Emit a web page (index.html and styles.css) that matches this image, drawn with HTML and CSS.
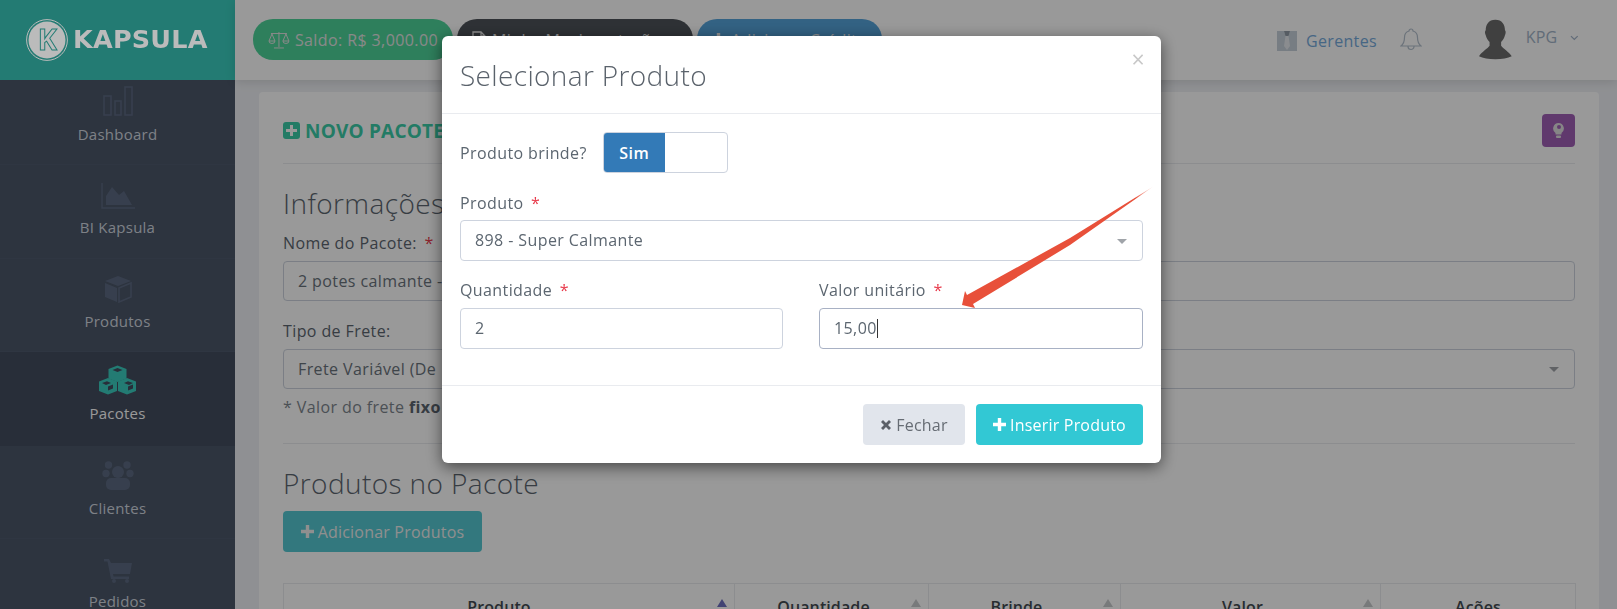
FILE: index.html
```html
<!DOCTYPE html>
<html lang="pt-BR">
<head>
<meta charset="utf-8">
<title>Kapsula - Novo Pacote</title>
<link rel="stylesheet" href="styles.css">
</head>
<body>
<div class="app">
  <aside class="sidebar">
    <div class="brand">
      <svg class="brand-mark" viewBox="0 0 42 42" width="42" height="42">
        <circle cx="21" cy="21" r="20.400" fill="none" stroke="#bbb" stroke-width="1"/>
        <circle cx="21" cy="21" r="18.500" fill="#bbb"/>
        <text x="21.500" y="31" text-anchor="middle" class="brand-k">K</text>
      </svg>
      <span class="brand-name">KAPSULA</span>
    </div>
    <nav class="nav">
      <a class="nav-item nav-first">
        <svg class="nav-icon" width="30" height="30" viewBox="0 0 30 30" fill="none" stroke="#5d6a82" stroke-width="1.600"><rect x="1" y="10" width="7" height="19"/><rect x="12" y="15" width="6" height="14"/><rect x="22" y="1" width="7" height="28"/></svg>
        <span>Dashboard</span>
      </a>
      <a class="nav-item">
        <svg class="nav-icon" width="34" height="26" viewBox="0 0 34 26"><path d="M1 0v25h33" fill="none" stroke="#5d6a82" stroke-width="1.400"/><path d="M5 22V13l6-9 7 8 5-4 8 14z" fill="#5d6a82"/></svg>
        <span>BI Kapsula</span>
      </a>
      <a class="nav-item">
        <svg class="nav-icon" width="28" height="28" viewBox="0 0 28 28"><path d="M14 1l13 5-13 5L1 6z" fill="#5d6a82"/><path d="M1 8l12 5v14L1 22z" fill="#5d6a82"/><path d="M15 13l12-5v14l-12 5z" fill="none" stroke="#5d6a82" stroke-width="1.600"/></svg>
        <span>Produtos</span>
      </a>
      <a class="nav-item is-active">
        <svg class="nav-icon" width="37" height="30" viewBox="0 0 37 30">
          <path class="cube" d="M18.500 0.500l9 3.500v9.500l-9 3.500-9-3.500V4z"/><path class="cube" d="M9 13l9 3.500V26l-9 3.500L0 26v-9.500z"/><path class="cube" d="M28 13l9 3.500V26l-9 3.500-9-3.500v-9.500z"/>
          <path class="cube-top" d="M18.500 3l5 2-5 2-5-2z"/><path class="cube-top" d="M3 18l5-1.800 4 1.800-5 2z"/><path class="cube-top" d="M25 18l4-1.800 5 1.800-4 2z"/>
          <path class="cube-top" d="M29 21.500l5-2v4l-5 2z"/><path class="cube-top" d="M9 21.500l5-2v4l-5 2z"/>
        </svg>
        <span>Pacotes</span>
      </a>
      <a class="nav-item">
        <svg class="nav-icon" width="32" height="29" viewBox="0 0 32 29" fill="#5d6a82"><circle cx="6.500" cy="4" r="3.700"/><circle cx="25" cy="4" r="3.700"/><circle cx="4" cy="12.500" r="3.700"/><circle cx="28" cy="12.500" r="3.700"/><circle cx="16" cy="11" r="6"/><rect x="4" y="17" width="24" height="12" rx="5"/></svg>
        <span>Clientes</span>
      </a>
      <a class="nav-item">
        <svg class="nav-icon" width="28" height="24" viewBox="0 0 28 24" fill="#5d6a82"><path d="M0 0h5l2 4h21l-2 11H9l.6 2.500H25V20H7L3.500 2.500H0z"/><circle cx="10" cy="22" r="2"/><circle cx="23" cy="22" r="2"/></svg>
        <span>Pedidos</span>
      </a>
    </nav>
  </aside>

  <div class="main">
    <header class="topbar">
      <div class="pills">
        <a class="pill pill-green">
          <svg width="22" height="18" viewBox="0 0 22 18" fill="none" stroke="currentColor" stroke-width="1"><path d="M11 1v15M6 17h10M3 2.500h16M4 3L1 10h6zM18 3l-3 7h6zM1 10a3 2.500 0 0 0 6 0M15 10a3 2.500 0 0 0 6 0"/></svg>
          Saldo: R$ 3,000.00
        </a>
        <a class="pill pill-dark">
          <svg width="14" height="17" viewBox="0 0 14 17" fill="none" stroke="currentColor" stroke-width="1.300"><path d="M1 1h8l4 4v11H1zM9 1v4h4"/></svg>
          Minha Movimentação
        </a>
        <a class="pill pill-blue"><svg class="plus" viewBox="0 0 13 13"><path d="M4.800 0h3.400v4.800H13v3.400H8.200V13H4.800V8.200H0V4.800h4.800z"/></svg> Adicionar Crédito</a>
      </div>
      <div class="top-right">
        <a class="managers">
          <svg width="20" height="20" viewBox="0 0 20 20"><rect width="20" height="20" fill="#c6d0da"/><path d="M7 0h6l-1.500 5 1.500 10-3 4-3-4 1.500-10z" fill="#e6eaef"/><path d="M7 0h6l-1.500 5h-3z" fill="#8f9aa6"/></svg>
          Gerentes
        </a>
        <svg class="bell" width="22" height="23" viewBox="0 0 22 23" fill="none" stroke="#b4c0cd" stroke-width="1.200"><path d="M11 1a2 2 0 0 1 2 2c3 .8 4.500 3.400 4.500 6.500 0 4.500 1 6.500 3.500 8.500H1c2.500-2 3.500-4 3.500-8.500C4.500 6.400 6 3.800 9 3a2 2 0 0 1 2-2zM8 18.500a3 3 0 0 0 6 0"/></svg>
        <div class="user">
          <svg width="34" height="41" viewBox="0 0 34 41" fill="#6b6b6b"><path d="M17 0c7 0 10 5 10 11 1 .5 1 3.500 0 5-.8 3-2 5-4 7v4c2 3 8 6 11 11-4 2-10 3-17 3S4 40 0 38c3-5 9-8 11-11v-4c-2-2-3.200-4-4-7-1-1.500-1-4.500 0-5C7 5 10 0 17 0z"/></svg>
          <span class="user-name">KPG</span>
          <svg class="chevron" width="9" height="6" viewBox="0 0 9 6" fill="none" stroke="#a2b4c9" stroke-width="1.300"><path d="M1 1l3.500 3.500L8 1"/></svg>
        </div>
      </div>
    </header>

    <main class="content">
      <section class="card">
        <div class="card-head">
          <h1 class="card-title">
            <svg width="17" height="17" viewBox="0 0 17 17"><rect width="17" height="17" rx="3" fill="#3bcea8"/><path d="M7 3h3v4h4v3h-4v4H7v-4H3V7h4z" fill="#fff"/></svg>
            NOVO PACOTE
          </h1>
          <a class="tip-btn">
            <svg width="11" height="15" viewBox="0 0 11 15"><path d="M5.500 0a5.500 5.500 0 0 1 3 10v1.500h-6V10a5.500 5.500 0 0 1 3-10z" fill="#e0e0e0"/><circle cx="6" cy="4" r="2" fill="#a05fb6"/><rect x="3" y="12.500" width="5" height="2.500" rx="1" fill="#e0e0e0"/></svg>
          </a>
        </div>
        <h2 class="section-title">Informações</h2>
        <label class="label">Nome do Pacote: <em class="req">*</em></label>
        <div class="field">2 potes calmante -</div>
        <label class="label label-gap">Tipo de Frete:</label>
        <div class="field field-select">Frete Variável (De</div>
        <p class="note">* Valor do frete <b>fixo</b></p>
        <hr class="rule">
        <h2 class="section-title section-products">Produtos no Pacote</h2>
        <a class="btn btn-add"><svg class="plus" viewBox="0 0 13 13"><path d="M4.800 0h3.400v4.800H13v3.400H8.200V13H4.800V8.200H0V4.800h4.800z"/></svg> Adicionar Produtos</a>
        <table class="table">
          <colgroup><col class="c1"><col class="c2"><col class="c3"><col class="c4"><col class="c5"></colgroup>
          <thead>
            <tr>
              <th class="sortable sort-on">Produto</th>
              <th class="sortable">Quantidade</th>
              <th class="sortable">Brinde</th>
              <th class="sortable">Valor</th>
              <th>Ações</th>
            </tr>
          </thead>
        </table>
      </section>
    </main>
  </div>
</div>

<div class="backdrop">
  <div class="modal">
    <div class="modal-head">
      <h3 class="modal-title">Selecionar Produto</h3>
      <span class="close">×</span>
    </div>
    <div class="modal-body">
      <div class="toggle-row">
        <span class="m-label">Produto brinde?</span>
        <div class="toggle"><span class="toggle-on">Sim</span><span class="toggle-off"></span></div>
      </div>
      <label class="m-label m-block">Produto <em class="req">*</em></label>
      <div class="m-field field-select">898 - Super Calmante</div>
      <div class="m-cols">
        <div>
          <label class="m-label m-block">Quantidade <em class="req">*</em></label>
          <div class="m-field">2</div>
        </div>
        <div>
          <label class="m-label m-block">Valor unitário <em class="req">*</em></label>
          <div class="m-field is-focus">15,00<i class="caret"></i></div>
        </div>
      </div>
    </div>
    <div class="modal-foot">
      <a class="btn btn-close"><svg width="12" height="12" viewBox="0 0 12 12"><path d="M1 3l2-2 3 3 3-3 2 2-3 3 3 3-2 2-3-3-3 3-2-2 3-3z" fill="#5b6068"/></svg> Fechar</a>
      <a class="btn btn-insert"><svg class="plus" viewBox="0 0 13 13"><path d="M4.800 0h3.400v4.800H13v3.400H8.200V13H4.800V8.200H0V4.800h4.800z"/></svg> Inserir Produto</a>
    </div>
  </div>
  <svg class="arrow" width="200" height="130" viewBox="0 0 200 130">
    <defs><linearGradient id="fade" x1="1" y1="0" x2="0" y2="1"><stop offset="0" stop-color="#e8503a" stop-opacity="0"/><stop offset=".1" stop-color="#e8503a"/></linearGradient></defs>
    <path d="M195 2L111 54 8 111 6 107 3 121 16 124 14 120 111 61z" fill="url(#fade)"/>
  </svg>
</div>
</body>
</html>
```
FILE: styles.css
```css
* { box-sizing: border-box; }
html, body { margin: 0; height: 609px; overflow: hidden; }
body { font-family: "Open Sans", "Liberation Sans", sans-serif; font-size: 16px; letter-spacing: .4px; color: #5c6670; background: #eff1f5; }
a { text-decoration: none; color: inherit; }
h1, h2, h3, p { margin: 0; font-weight: 400; }
em { font-style: normal; }

.app { display: flex; height: 609px; overflow: hidden; }

.sidebar { width: 235px; flex: none; background: #4b5769; color: #d2d7e0; }
.brand { height: 80px; background: #3bcec0; display: flex; align-items: center; padding: 0 0 0 26px; gap: 5px; }
.brand-mark, .brand-name { position: relative; z-index: 20; }
.brand-k { font: 700 29px "Open Sans", sans-serif; fill: none; stroke: #237c74; stroke-width: 1; }
.brand-name { font: 700 25.500px/1 "DejaVu Sans", sans-serif; color: #bbb; letter-spacing: .2px; }

.nav-item { height: 93.500px; display: flex; flex-direction: column; align-items: center; justify-content: flex-end; padding-bottom: 20.500px; gap: 9px; border-bottom: 1px solid #4f5b6e; font-size: 15px; letter-spacing: .25px; line-height: 19px; }
.nav-first { height: 85px; padding-bottom: 20px; }
.nav-icon { display: block; flex: none; }
.is-active { background: #434d5f; color: #fff; border-bottom-color: #434d5f; padding-bottom: 22px; }
.cube { fill: #3bcec0; }
.cube-top { fill: #434d5f; }

.main { flex: 1; min-width: 0; }
.topbar { height: 80px; background: #fff; display: flex; align-items: center; justify-content: space-between; padding: 0 38px 0 18px; box-shadow: 0 2px 10px rgba(0,0,0,.12); position: relative; }
.pills { display: flex; gap: 4px; margin-top: -1px; }
.pill { height: 41px; border-radius: 20px; display: flex; align-items: center; gap: 6px; padding: 0 15px; color: #eee; white-space: nowrap; }
.pill-green { background: #4ed49a; width: 200px; color: #e4e4e4; gap: 5px; }
.pill-dark { background: #4d5359; width: 236px; }
.pill-blue { background: #55a3da; width: 185px; }
.plus { width: 13px; height: 13px; flex: none; fill: currentColor; }

.top-right { display: flex; align-items: center; margin-top: -2px; }
.managers { display: flex; align-items: center; gap: 9px; color: #76abdc; margin-top: 4px; letter-spacing: .35px; }
.bell { margin: 0 0 0 23px; }
.user { display: flex; align-items: flex-start; margin-left: 57px; width: 100px; height: 41px; }
.user-name { margin: 8px 0 0 14px; font-size: 16px; letter-spacing: .2px; color: #a2b4c9; line-height: 20px; }
.chevron { margin: 16px 0 0 13px; }

.content { padding: 12px 18px 0 24px; }
.card { background: #fff; border-radius: 4px; padding: 22px 24px 0; height: 560px; }
.card-head { display: flex; justify-content: space-between; align-items: center; height: 33px; margin-bottom: 17px; position: relative; }
.card-head::after { content: ""; position: absolute; left: 0; right: 0; bottom: -17px; border-bottom: 1px solid #e9ebef; }
.card-title { display: flex; align-items: center; gap: 5px; font-size: 19px; letter-spacing: .2px; font-weight: 700; color: #3bcea8; white-space: nowrap; }
.tip-btn { width: 33px; height: 33px; border-radius: 4px; background: #a05fb6; display: flex; align-items: center; justify-content: center; }
.section-title { font-size: 28px; font-weight: 300; line-height: 37px; color: #5c6670; margin-top: 38px; }
.label { display: block; line-height: 20px; margin-top: 11px; margin-bottom: 8px; color: #5c6670; }
.label-gap { margin-top: 20px; margin-bottom: 8px; }
.req { color: #e8394a; margin-left: 3px; }
.field { height: 40px; border: 1px solid #cdd3de; border-radius: 4px; padding: 0 14px; line-height: 38px; position: relative; color: #6a737c; }
.field-select::after { content: ""; position: absolute; right: 15px; top: 50%; margin-top: -2px; border: 5px solid transparent; border-top-color: #a0a4a9; border-bottom: 0; }
.note { line-height: 20px; margin-top: 8px; color: #7d868e; }
.note b { font-weight: 700; color: #5c6670; }
.rule { border: 0; border-top: 1px solid #e9ebef; margin: 26px 0 0; }
.section-products { margin-top: 21px; letter-spacing: .4px; }
.btn { display: inline-flex; align-items: center; justify-content: center; gap: 4px; height: 41px; border-radius: 4px; white-space: nowrap; letter-spacing: .2px; }
.btn-add { background: #55c8d2; color: #eee; width: 199px; margin-top: 9px; }
.table { width: 100%; border-collapse: collapse; table-layout: fixed; margin-top: 31px; }
.c1 { width: 451px; } .c2 { width: 194px; } .c3 { width: 192px; } .c4 { width: 260px; } .c5 { width: 195px; }
.table th { border: 1px solid #e9ebef; height: 46px; padding: 0 16px 0 0; font-size: 16px; letter-spacing: .1px; font-weight: 600; color: #444b52; text-align: center; position: relative; vertical-align: middle; }
.table th:first-child { padding-right: 20px; }
.table th:last-child { padding-right: 0; }
.sortable::after { content: ""; position: absolute; right: 7px; top: 15px; border: 5px solid transparent; border-bottom: 8px solid #c9cbce; border-top: 0; }
.sort-on::after { border-bottom-color: #6f70c0; }

.backdrop { position: fixed; inset: 0; background: rgba(0,0,0,.4); z-index: 10; padding: 36px 0 0 442px; }
.modal { width: 719px; height: 427px; background: #fff; border-radius: 6px; box-shadow: 0 4px 16px rgba(0,0,0,.55); display: flex; flex-direction: column; }
.modal-head { height: 78px; border-bottom: 1px solid #e9ebef; display: flex; align-items: center; justify-content: space-between; padding: 0 16px 0 18px; }
.modal-title { font-size: 28px; font-weight: 300; color: #5a626b; letter-spacing: .35px; }
.close { font-size: 23px; color: #c8c8c8; line-height: 1; margin-top: -31px; }
.modal-body { padding: 18px 18px 0 18px; flex: 1; }
.toggle-row { display: flex; align-items: center; gap: 16px; height: 41px; margin-bottom: 20px; }
.m-label { line-height: 20px; color: #5c6670; }
.m-block { display: block; margin-bottom: 7px; }
.toggle { width: 125px; height: 41px; border: 1px solid #cdd3de; border-radius: 4px; display: flex; overflow: hidden; }
.toggle-on { width: 61px; background: #337ab7; color: #fff; font-weight: 600; display: flex; align-items: center; justify-content: center; }
.m-field { height: 41px; border: 1px solid #cdd3de; border-radius: 4px; padding: 0 14px; line-height: 38px; color: #5c6670; position: relative; }
.is-focus { border-color: #a8b1c4; }
.caret { display: inline-block; width: 1px; height: 19px; background: #333; vertical-align: -4px; }
.m-cols { display: grid; grid-template-columns: 323px 324px; column-gap: 36px; margin-top: 19px; }
.m-cols .m-block { margin-bottom: 8px; }
.modal-foot { height: 78px; border-top: 1px solid #e9ebef; display: flex; justify-content: flex-end; align-items: flex-start; gap: 11px; padding: 18px 18px 0 0; }
.btn-close { width: 102px; background: #e1e5ec; color: #666c74; }
.btn-insert { width: 167px; background: #32c8d4; color: #fff; }
.arrow { position: absolute; left: 959px; top: 184px; }
```
